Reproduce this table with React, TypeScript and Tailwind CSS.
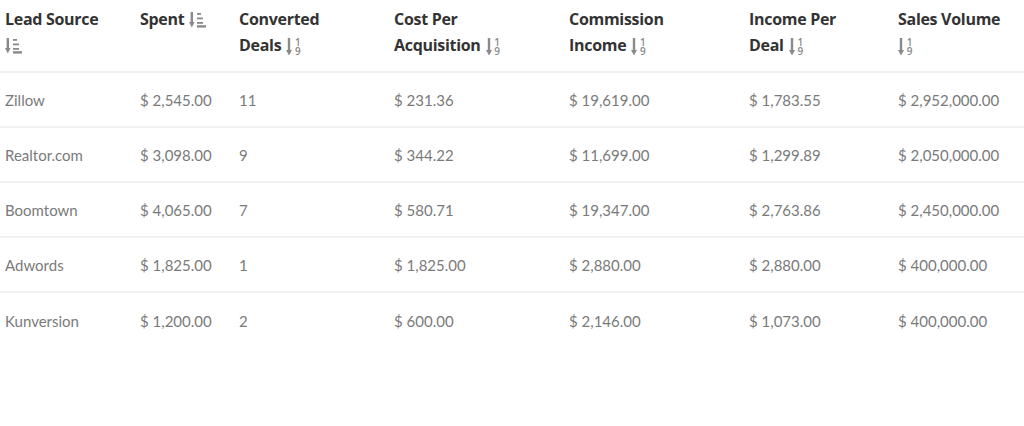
const rows = [
  ["Zillow", "$ 2,545.00", "11", "$ 231.36", "$ 19,619.00", "$ 1,783.55", "$ 2,952,000.00"],
  ["Realtor.com", "$ 3,098.00", "9", "$ 344.22", "$ 11,699.00", "$ 1,299.89", "$ 2,050,000.00"],
  ["Boomtown", "$ 4,065.00", "7", "$ 580.71", "$ 19,347.00", "$ 2,763.86", "$ 2,450,000.00"],
  ["Adwords", "$ 1,825.00", "1", "$ 1,825.00", "$ 2,880.00", "$ 2,880.00", "$ 400,000.00"],
  ["Kunversion", "$ 1,200.00", "2", "$ 600.00", "$ 2,146.00", "$ 1,073.00", "$ 400,000.00"],
];

const widths = ["w-[135px]", "w-[99px]", "w-[155px]", "w-[175px]", "w-[180px]", "w-[149px]", "w-[131px]"];

// arrow pointing down + bars getting longer
const AmountIcon = ({ gap = true }: { gap?: boolean }) => (
  <svg
    width="17"
    height="16"
    viewBox="0 0 17 16"
    className={`inline-block align-[-3px] ${gap ? "ml-[5px]" : ""}`}
    fill="#8a8a8a"
  >
    <rect x="1.6" y="0" width="2.4" height="11" />
    <path d="M0 10 L5.6 10 L2.8 15.5 Z" />
    <rect x="8" y="1" width="4" height="1.8" />
    <rect x="8" y="5.5" width="6" height="1.8" />
    <rect x="8" y="10" width="6" height="1.8" />
    <rect x="8" y="13.2" width="9" height="2.4" />
  </svg>
);

// arrow + "1 over 9", digits kept in one text node
const NumIcon = ({ gap = true }: { gap?: boolean }) => (
  <span className={`inline-flex items-center align-[-5px] ${gap ? "ml-[5px]" : ""}`}>
    <svg width="6" height="18" viewBox="0 0 6 18" fill="#8a8a8a">
      <rect x="1.8" y="0" width="2.4" height="13" />
      <path d="M0 12 L6 12 L3 17.5 Z" />
    </svg>
    <span className="block w-[7px] ml-[2px] break-all text-center text-[10px] leading-[9px] font-semibold text-[#8a8a8a] font-['Open_Sans',sans-serif]">
      19
    </span>
  </span>
);

export default function App() {
  const headers = [
    <>Lead Source<br /><AmountIcon gap={false} /></>,
    <>Spent<AmountIcon /></>,
    <>Converted<br />Deals<NumIcon /></>,
    <>Cost Per<br />Acquisition<NumIcon /></>,
    <>Commission<br />Income<NumIcon /></>,
    <>Income Per<br />Deal<NumIcon /></>,
    <>Sales Volume<br /><NumIcon gap={false} /></>,
  ];

  return (
    <div className="w-[1024px] h-[426px] bg-white font-['Lato',sans-serif]">
      <table className="table-fixed w-full border-collapse">
        <thead>
          <tr className="border-b-2 border-[#f1f1f1]">
            {headers.map((h, i) => (
              <th
                key={i}
                className={`${widths[i]} text-left align-top pl-[5px] pt-[6px] pb-[13px] text-[16px] leading-[26px] font-bold text-[#333] font-['Open_Sans',sans-serif] tracking-[-0.3px]`}
              >
                {h}
              </th>
            ))}
          </tr>
        </thead>
        <tbody>
          {rows.map((r, ri) => (
            <tr key={ri} className={ri < rows.length - 1 ? "border-b-2 border-[#f1f1f1]" : ""}>
              {r.map((c, ci) => (
                <td key={ci} className="pl-[5px] pt-[2px] h-[55px] text-[15px] text-[#7a7a7a] align-middle">
                  {c}
                </td>
              ))}
            </tr>
          ))}
        </tbody>
      </table>
    </div>
  );
}
